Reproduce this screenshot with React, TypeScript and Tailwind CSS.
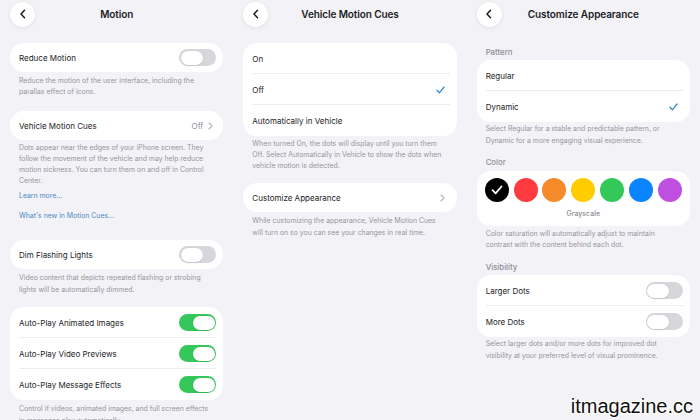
import type { ReactNode } from "react";

const font = "font-['Inter','Noto_Sans',sans-serif]";

function BackButton() {
  return (
    <div className="size-[25px] shrink-0 rounded-full bg-white shadow-[0_1px_4px_rgba(0,0,0,0.08)] flex items-center justify-center">
      <svg width="8" height="10" viewBox="0 0 8 10" fill="none">
        <path d="M5.5 1.2 L2 5 L5.5 8.8" stroke="#1c1c1e" strokeWidth="1.5" strokeLinecap="round" strokeLinejoin="round" />
      </svg>
    </div>
  );
}

function Header({ title }: { title: string }) {
  return (
    <div className="h-[28px] flex items-center">
      <BackButton />
      <div className="flex-1 text-center text-[10px] font-semibold text-[#1c1c1e] tracking-[-0.1px]">{title}</div>
      <div className="w-[25px] shrink-0" />
    </div>
  );
}

function Card({ children, className = "" }: { children: ReactNode; className?: string }) {
  return <div className={`bg-white rounded-[14px] ${className}`}>{children}</div>;
}

function Toggle({ on }: { on: boolean }) {
  return (
    <div
      className={`w-[37px] h-[17px] rounded-full p-[1.5px] flex shrink-0 ${
        on ? "bg-[#34c759] justify-end" : "bg-[#d6d6db] justify-start"
      }`}
    >
      <div className="w-[22px] h-[14px] rounded-full bg-white shadow-[0_0.5px_1.5px_rgba(0,0,0,0.15)]" />
    </div>
  );
}

function Check() {
  return (
    <svg width="9" height="8" viewBox="0 0 9 8" fill="none">
      <path d="M1 4.3 L3.4 6.8 L8 1" stroke="#3d88c9" strokeWidth="1.3" strokeLinecap="round" strokeLinejoin="round" />
    </svg>
  );
}

function Chevron() {
  return (
    <svg width="5" height="8" viewBox="0 0 5 8" fill="none">
      <path d="M1 1 L4 4 L1 7" stroke="#b3b3b8" strokeWidth="1.1" strokeLinecap="round" strokeLinejoin="round" />
    </svg>
  );
}

function Row({ label, right, h = "h-[31px]", sep = false }: { label: string; right?: ReactNode; h?: string; sep?: boolean }) {
  return (
    <div className={`relative ${h} flex items-center justify-between pl-[9px] pr-[7px]`}>
      <span className="text-[8px] text-[#1c1c1e]">{label}</span>
      {right}
      {sep && <div className="absolute left-[9px] right-[7px] bottom-0 h-px bg-[#ececf0]" />}
    </div>
  );
}

function Footer({ children, className = "" }: { children: ReactNode; className?: string }) {
  return <div className={`px-[9px] text-[6.9px] text-[#97979c] ${className}`}>{children}</div>;
}

function SectionTitle({ children, className = "" }: { children: ReactNode; className?: string }) {
  return <div className={`px-[9px] h-[10px] leading-[10px] text-[7.8px] font-medium text-[#8e8e93] ${className}`}>{children}</div>;
}

const colors = ["#000000", "#ff3b3f", "#f58a2a", "#ffcc00", "#34c759", "#0a84ff", "#bf4fe0"];

export default function App() {
  return (
    <div className={`${font} relative w-[700px] h-[420px] overflow-hidden bg-[#f2f2f7] grid grid-cols-3`}>
      {/* Motion */}
      <div className="px-[10px] flex flex-col">
        <Header title="Motion" />
        <Card className="mt-[15px]">
          <Row label="Reduce Motion" h="h-[29px]" right={<Toggle on={false} />} />
        </Card>
        <Footer className="pt-[3px] leading-[11px]">
          Reduce the motion of the user interface, including the
          <br />
          parallax effect of icons.
        </Footer>
        <Card className="mt-[14px]">
          <Row
            label="Vehicle Motion Cues"
            h="h-[29px]"
            right={
              <div className="flex items-center gap-[5px] pr-[3px]">
                <span className="text-[8px] text-[#8e8e93]">Off</span>
                <Chevron />
              </div>
            }
          />
        </Card>
        <Footer className="pt-[2px] leading-[11px]">
          Dots appear near the edges of your iPhone screen. They
          <br />
          follow the movement of the vehicle and may help reduce
          <br />
          motion sickness. You can turn them on and off in Control
          <br />
          Center.
        </Footer>
        <Footer className="mt-[4px] leading-[11px] !text-[#4a8cc6]">Learn more…</Footer>
        <Footer className="mt-[9px] leading-[11px] !text-[#4a8cc6]">What's new in Motion Cues…</Footer>
        <Card className="mt-[19px]">
          <Row label="Dim Flashing Lights" h="h-[29px]" right={<Toggle on={false} />} />
        </Card>
        <Footer className="pt-[3px] leading-[11.5px]">
          Video content that depicts repeated flashing or strobing
          <br />
          lights will be automatically dimmed.
        </Footer>
        <Card className="mt-[12px]">
          <Row label="Auto-Play Animated Images" sep right={<Toggle on />} />
          <Row label="Auto-Play Video Previews" sep right={<Toggle on />} />
          <Row label="Auto-Play Message Effects" right={<Toggle on />} />
        </Card>
        <Footer className="pt-[3px] leading-[11.5px]">
          Control if videos, animated images, and full screen effects
          <br />
          in messages play automatically.
        </Footer>
      </div>

      {/* Vehicle Motion Cues */}
      <div className="px-[10px] flex flex-col">
        <Header title="Vehicle Motion Cues" />
        <Card className="mt-[15px]">
          <Row label="On" sep />
          <Row label="Off" sep right={<div className="pr-[5px]"><Check /></div>} />
          <Row label="Automatically in Vehicle" />
        </Card>
        <Footer className="pt-[2px] leading-[11px]">
          When turned On, the dots will display until you turn them
          <br />
          Off. Select Automatically in Vehicle to show the dots when
          <br />
          vehicle motion is detected.
        </Footer>
        <Card className="mt-[12px]">
          <Row label="Customize Appearance" h="h-[29px]" right={<div className="pr-[5px]"><Chevron /></div>} />
        </Card>
        <Footer className="pt-[3px] leading-[11.5px]">
          While customizing the appearance, Vehicle Motion Cues
          <br />
          will turn on so you can see your changes in real time.
        </Footer>
      </div>

      {/* Customize Appearance */}
      <div className="px-[10px] flex flex-col">
        <Header title="Customize Appearance" />
        <SectionTitle className="mt-[19px]">Pattern</SectionTitle>
        <Card className="mt-[3px]">
          <Row label="Regular" sep />
          <Row label="Dynamic" right={<div className="pr-[5px]"><Check /></div>} />
        </Card>
        <Footer className="pt-[1px] leading-[11.5px]">
          Select Regular for a stable and predictable pattern, or
          <br />
          Dynamic for a more engaging visual experience.
        </Footer>
        <SectionTitle className="mt-[11px]">Color</SectionTitle>
        <Card className="mt-[4px] px-[8px] pt-[7px] pb-[7px]">
          <div className="flex justify-between">
            {colors.map((c, i) => (
              <div key={c} className="size-[24px] rounded-full flex items-center justify-center" style={{ backgroundColor: c }}>
                {i === 0 && (
                  <svg width="12" height="10" viewBox="0 0 12 10" fill="none">
                    <path d="M1.5 5.2 L4.6 8.3 L10.5 1.5" stroke="#fff" strokeWidth="1.8" strokeLinecap="round" strokeLinejoin="round" />
                  </svg>
                )}
              </div>
            ))}
          </div>
          <div className="mt-[7px] h-[10px] leading-[10px] text-center text-[7px] font-medium text-[#8e8e93]">Grayscale</div>
        </Card>
        <Footer className="pt-[2px] leading-[11px]">
          Color saturation will automatically adjust to maintain
          <br />
          contrast with the content behind each dot.
        </Footer>
        <SectionTitle className="mt-[12px]">Visibility</SectionTitle>
        <Card className="mt-[3px]">
          <Row label="Larger Dots" sep right={<Toggle on={false} />} />
          <Row label="More Dots" right={<Toggle on={false} />} />
        </Card>
        <Footer className="pt-[1px] leading-[11.5px]">
          Select larger dots and/or more dots for improved dot
          <br />
          visibility at your preferred level of visual prominence.
        </Footer>
      </div>

      <div className="absolute right-[7px] bottom-[2px] font-['Liberation_Sans',sans-serif] text-[20px] leading-[24px] text-[#111] [text-shadow:-1px_-1px_0_#fff,1px_-1px_0_#fff,-1px_1px_0_#fff,1px_1px_0_#fff]">
        itmagazine.cc
      </div>
    </div>
  );
}
